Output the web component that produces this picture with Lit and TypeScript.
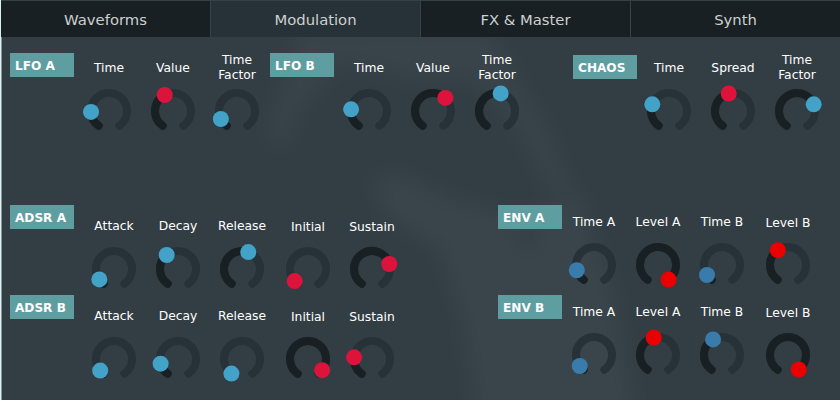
import { LitElement, html, css, svg } from "lit";
import { customElement, property } from "lit/decorators.js";
import { classMap } from "lit/directives/class-map.js";

type Tone = "sky" | "crimson" | "steel" | "red";
interface Knob {
  label: string[];
  angle: number;
  tone: Tone;
  low?: boolean;
  gap?: boolean;
}
interface Section {
  name: string;
  area: string;
  knobs: Knob[];
}

const RADIUS = 18;
const LIMIT = 145;

// Angles are in degrees, clockwise from twelve o'clock.
const point = (deg: number): [number, number] => {
  const a = (deg * Math.PI) / 180;
  return [32 + RADIUS * Math.sin(a), 26 - RADIUS * Math.cos(a)];
};
const arc = (from: number, to: number) => {
  const [x1, y1] = point(from);
  const [x2, y2] = point(to);
  return `M${x1} ${y1}A${RADIUS} ${RADIUS} 0 ${to - from > 180 ? 1 : 0} 1 ${x2} ${y2}`;
};

const k = (text: string, angle: number, tone: Tone, extra: Partial<Knob> = {}): Knob => ({
  label: text.split("|"),
  angle,
  tone,
  ...extra,
});

const SECTIONS: Section[] = [
  { name: "LFO A", area: "lfo-a", knobs: [k("Time", -93, "sky"), k("Value", -27.4, "crimson"), k("Time|Factor", -116.3, "sky")] },
  { name: "LFO B", area: "lfo-b", knobs: [k("Time", -84.6, "sky"), k("Value", 43.4, "crimson"), k("Time|Factor", 11.8, "sky")] },
  { name: "CHAOS", area: "chaos", knobs: [k("Time", -68.1, "sky"), k("Spread", -13.8, "crimson"), k("Time|Factor", 68.1, "sky")] },
  {
    name: "ADSR A", area: "adsr",
    knobs: [k("Attack", -125.5, "sky"), k("Decay", -38.9, "sky"), k("Release", 20.3, "sky"),
      k("Initial", -132, "crimson", { low: true, gap: true }), k("Sustain", 73.9, "crimson", { low: true })],
  },
  {
    name: "ENV A", area: "env",
    knobs: [k("Time A", -107, "steel"), k("Level A", 144, "red"), k("Time B", -123.7, "steel"),
      k("Level B", -34.5, "red", { low: true, gap: true })],
  },
  {
    name: "ADSR B", area: "adsr",
    knobs: [k("Attack", -130, "sky"), k("Decay", -105, "sky"), k("Release", -144, "sky"),
      k("Initial", 128.2, "crimson", { low: true, gap: true }), k("Sustain", -84.6, "crimson", { low: true })],
  },
  {
    name: "ENV B", area: "env",
    knobs: [k("Time A", -127.6, "steel"), k("Level A", -13.7, "red"), k("Time B", -29.8, "steel"),
      k("Level B", 143.6, "red", { low: true, gap: true })],
  },
];

@customElement("synth-knob")
class SynthKnob extends LitElement {
  @property({ attribute: false }) knob!: Knob;

  static styles = css`
    :host { display: block; flex: none; width: 64px; }
    .label {
      display: flex; flex-direction: column; align-items: center; justify-content: center;
      box-sizing: border-box; height: 36px; padding-top: 2px; line-height: 15px; color: #fff;
      font-size: 12.3px; white-space: nowrap;
    }
    .low { padding-top: 4px; }
    .dial { display: block; overflow: visible; }
    .track, .fill { fill: none; stroke-width: 8; stroke-linecap: round; }
    .track { stroke: #263238; }
    .fill { stroke: #182023; }
    .sky { fill: #42a2c8; }
    .crimson { fill: #dc143c; }
    .steel { fill: #397cab; }
    .red { fill: #eb0000; }
  `;

  render() {
    const { label, angle, tone, low } = this.knob;
    const [x, y] = point(angle);
    return html`
      <div class=${classMap({ label: true, low: !!low })}>${label.map((l) => html`<span>${l}</span>`)}</div>
      <svg class="dial" width="64" height="52" viewBox="0 0 64 52">
        ${svg`<path class="track" d=${arc(-LIMIT, LIMIT)} />
        <path class="fill" d=${arc(-LIMIT, angle)} />
        <circle class=${tone} cx=${x} cy=${y} r="8" />`}
      </svg>`;
  }
}

@customElement("app-root")
class AppRoot extends LitElement {
  static styles = css`
    :host {
      display: block; position: relative; box-sizing: border-box; width: 840px; height: 400px;
      overflow: hidden; background: #323e44; border-left: 1px solid #dff0f0;
      font-family: "DejaVu Sans", Verdana, sans-serif;
    }
    .backdrop { position: absolute; top: 0; left: -1px; }
    .content { position: relative; }
    .tabs { display: grid; grid-template-columns: 210px 210px 210px 209px; height: 37px; border-top: 1px solid #344146; box-sizing: border-box; }
    .tab {
      display: flex; align-items: center; justify-content: center; box-sizing: border-box;
      background: #182023; color: #ced0d1; font-size: 14.8px; border-right: 1px solid #364248;
      padding-top: 1px;
    }
    .tab:last-child { border-right: 0; }
    .active { background: #263238; }
    .panel {
      display: grid; box-sizing: border-box; height: 363px; border-left: 1px solid #87989d;
      padding: 12px 0 0 8px; grid-template-rows: 154px 90px 90px;
    }
    .row { display: flex; }
    .section { display: flex; align-items: flex-start; }
    .tag {
      box-sizing: border-box; flex: none; width: 64px; height: 24px; padding-left: 5px;
      background: #5f9ea0; color: #fff; font-weight: bold; font-size: 12.1px; line-height: 26px;
      white-space: nowrap; margin-top: 4px;
    }
    .knobs { display: flex; margin-left: 3px; }
    .gap { margin-left: 2px; }
    .lfo-a { width: 260px; }
    .lfo-b { width: 303px; }
    .chaos .tag { margin-top: 6px; }
    .chaos .knobs, .env .knobs { margin-left: 0; }
    .adsr { width: 488px; }
    .adsr .tag, .env .tag { margin-top: 2px; }
    .adsr .knobs { margin: 4px 0 0 8px; }
  `;

  private section(s: Section) {
    return html`<section class="section ${s.area}">
      <div class="tag">${s.name}</div>
      <div class="knobs">
        ${s.knobs.map((item) => html`<synth-knob class=${classMap({ gap: !!item.gap })} .knob=${item}></synth-knob>`)}
      </div>
    </section>`;
  }

  render() {
    const rows = [SECTIONS.slice(0, 3), SECTIONS.slice(3, 5), SECTIONS.slice(5)];
    return html`
      <svg class="backdrop" width="840" height="400" viewBox="0 0 840 400">
        <defs>
          <filter id="soft" x="-30%" y="-30%" width="160%" height="160%" color-interpolation-filters="sRGB">
            <feGaussianBlur stdDeviation="10" />
          </filter>
        </defs>
        <rect width="840" height="400" fill="#323e44" />
        <g filter="url(#soft)">
          <rect x="-60" y="-60" width="960" height="520" fill="#323e44" />
          <path d="M300 30H490L545 125L580 205L550 190L505 110L470 80L420 80L340 62L300 110L285 150L266 135Z" fill="#384449" />
          <path d="M372 178L400 174L455 200L520 216L580 195L615 300L632 400V440H475V400L462 320L440 250L385 215Z" fill="#39454a" />
          <ellipse cx="527" cy="238" rx="12" ry="9" fill="#323e44" />
        </g>
      </svg>
      <div class="content">
        <nav class="tabs">
          ${["Waveforms", "Modulation", "FX & Master", "Synth"].map(
            (t) => html`<div class=${classMap({ tab: true, active: t === "Modulation" })}>${t}</div>`,
          )}
        </nav>
        <main class="panel">
          ${rows.map((row) => html`<div class="row">${row.map((s) => this.section(s))}</div>`)}
        </main>
      </div>`;
  }
}
